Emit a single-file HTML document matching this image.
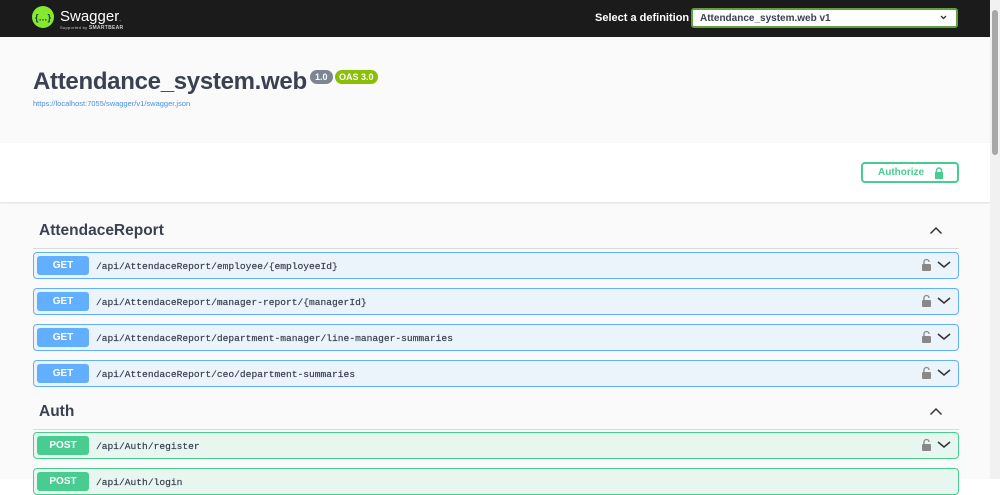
<!DOCTYPE html>
<html><head><style>
*{box-sizing:border-box;margin:0;padding:0}
body{width:1000px;height:479px;overflow:hidden;background:#fff;font-family:"Liberation Sans",sans-serif;position:relative}
.top{position:absolute;left:0;top:0;width:990px;height:37px;background:#1b1b1b}
.abs{position:absolute}
.sb{position:absolute;left:990px;top:0;width:10px;height:479px;background:#f1f1f1}
.sb div{position:absolute;left:2px;top:10px;width:6px;height:145px;background:#a8a8a8;border-radius:3px}
.op{position:absolute;left:33px;width:926px;height:27px;border:1px solid #61affe;background:#ebf3fb;border-radius:4px}
.op.post{border-color:#49cc90;background:#e8f6f0}
.m{position:absolute;left:3px;top:3px;width:52px;height:19px;background:#61affe;color:#fff;font-weight:bold;font-size:10px;text-align:center;line-height:19px;border-radius:3px}
.post .m{background:#49cc90}
.p{position:absolute;left:62px;top:1px;line-height:25px;font-family:"Liberation Mono",monospace;font-size:9.6px;color:#3b4151;-webkit-text-stroke:.2px #3b4151}
.tag{position:absolute;left:33px;width:926px;border-bottom:1px solid #d8dade;font-size:15.5px;font-weight:bold;color:#3b4151}
.ic{position:absolute;left:921px}
</style></head><body>
<div class="top"></div>
<svg class="abs" style="left:32px;top:6px" width="22" height="22" viewBox="0 0 22 22"><circle cx="11" cy="11" r="11" fill="#85ea2d"/><text x="11" y="14.5" font-size="9" text-anchor="middle" fill="#173647" font-family="Liberation Sans" font-weight="bold">{…}</text></svg>
<div class="abs" style="left:60px;top:8px;color:#fff;font-size:15px">Swagger<span style="font-size:6px">.</span></div>
<div class="abs" style="left:60px;top:25px;color:#ccc;font-size:4px;letter-spacing:.3px">Supported by <b style="font-size:5px">SMARTBEAR</b></div>
<div class="abs" style="left:595px;top:12px;color:#fff;font-size:11px;font-weight:bold">Select a definition</div>
<div class="abs" style="left:691px;top:8px;width:267px;height:20px;background:#fff;border:2px solid #62a03f;border-radius:3px;font-size:10px;font-weight:bold;color:#3b4151;padding:3px 7px">Attendance_system.web v1<svg style="position:absolute;right:9px;top:5px" width="7" height="5" viewBox="0 0 7 5"><path d="M1 1l2.5 2.5L6 1" fill="none" stroke="#333" stroke-width="1.3"/></svg></div>
<div class="abs" style="left:0;top:37px;width:990px;height:106px;background:#fafafa"></div>
<div class="abs" style="left:33px;top:68px;font-size:24px;font-weight:bold;color:#3b4151;letter-spacing:-.3px">Attendance_system.web</div>
<div class="abs" style="left:310px;top:70px;background:#7d8492;color:#fff;font-size:9px;font-weight:bold;border-radius:8px;padding:2px 5px">1.0</div>
<div class="abs" style="left:335px;top:70px;background:#89bf04;color:#fff;font-size:9px;font-weight:bold;border-radius:8px;padding:2px 4px">OAS 3.0</div>
<div class="abs" style="left:33px;top:99px;font-size:7.5px;color:#4990e2">https://localhost:7055/swagger/v1/swagger.json</div>
<div class="abs" style="left:0;top:143px;width:990px;height:60px;background:#fff;border-bottom:1px solid #e8e8e8;box-shadow:0 1px 2px rgba(0,0,0,.1)"></div>
<div class="abs" style="left:861px;top:162px;width:98px;height:21px;border:2px solid #49cc90;border-radius:4px;color:#49cc90;font-size:10px;font-weight:bold;padding:3px 0 0 15px">Authorize<svg style="position:absolute;left:71px;top:3px" width="10" height="12" viewBox="0 0 10 12"><path d="M2.5 5V3.5a2.5 2.5 0 015 0V5" fill="none" stroke="#49cc90" stroke-width="1.5"/><rect x="1" y="5" width="8" height="7" fill="#49cc90"/></svg></div>
<div class="abs" style="left:0;top:204px;width:990px;height:275px;background:#fafafa"></div>
<div class="tag" style="top:220px;height:29px;padding:2px 6px">AttendaceReport<svg style="position:absolute;right:16px;top:6px" width="14" height="9" viewBox="0 0 14 9"><path d="M1.5 7.5L7 2l5.5 5.5" fill="none" stroke="#333" stroke-width="1.5"/></svg></div>
<div class="op" style="top:252px"><div class="m">GET</div><div class="p">/api/AttendaceReport/employee/{employeeId}</div></div>
<div class="op" style="top:288px"><div class="m">GET</div><div class="p">/api/AttendaceReport/manager-report/{managerId}</div></div>
<div class="op" style="top:324px"><div class="m">GET</div><div class="p">/api/AttendaceReport/department-manager/line-manager-summaries</div></div>
<div class="op" style="top:360px"><div class="m">GET</div><div class="p">/api/AttendaceReport/ceo/department-summaries</div></div>
<div class="tag" style="top:401px;height:29px;padding:2px 6px">Auth<svg style="position:absolute;right:16px;top:6px" width="14" height="9" viewBox="0 0 14 9"><path d="M1.5 7.5L7 2l5.5 5.5" fill="none" stroke="#333" stroke-width="1.5"/></svg></div>
<div class="op post" style="top:432px"><div class="m">POST</div><div class="p">/api/Auth/register</div></div>
<div class="op post" style="top:468px"><div class="m">POST</div><div class="p">/api/Auth/login</div></div>
<svg class="ic" style="top:258px" width="36" height="14" viewBox="0 0 36 14"><path d="M3 6V4a2.5 2.5 0 015 0" fill="none" stroke="#888" stroke-width="1.3"/><rect x="1" y="6" width="9" height="7" rx="1" fill="#888"/><path d="M17 4l6 5 6-5" fill="none" stroke="#333" stroke-width="1.5"/></svg>
<svg class="ic" style="top:294px" width="36" height="14" viewBox="0 0 36 14"><path d="M3 6V4a2.5 2.5 0 015 0" fill="none" stroke="#888" stroke-width="1.3"/><rect x="1" y="6" width="9" height="7" rx="1" fill="#888"/><path d="M17 4l6 5 6-5" fill="none" stroke="#333" stroke-width="1.5"/></svg>
<svg class="ic" style="top:330px" width="36" height="14" viewBox="0 0 36 14"><path d="M3 6V4a2.5 2.5 0 015 0" fill="none" stroke="#888" stroke-width="1.3"/><rect x="1" y="6" width="9" height="7" rx="1" fill="#888"/><path d="M17 4l6 5 6-5" fill="none" stroke="#333" stroke-width="1.5"/></svg>
<svg class="ic" style="top:366px" width="36" height="14" viewBox="0 0 36 14"><path d="M3 6V4a2.5 2.5 0 015 0" fill="none" stroke="#888" stroke-width="1.3"/><rect x="1" y="6" width="9" height="7" rx="1" fill="#888"/><path d="M17 4l6 5 6-5" fill="none" stroke="#333" stroke-width="1.5"/></svg>
<svg class="ic" style="top:438px" width="36" height="14" viewBox="0 0 36 14"><path d="M3 6V4a2.5 2.5 0 015 0" fill="none" stroke="#888" stroke-width="1.3"/><rect x="1" y="6" width="9" height="7" rx="1" fill="#888"/><path d="M17 4l6 5 6-5" fill="none" stroke="#333" stroke-width="1.5"/></svg>
<div class="sb"><div></div></div>
</body></html>
